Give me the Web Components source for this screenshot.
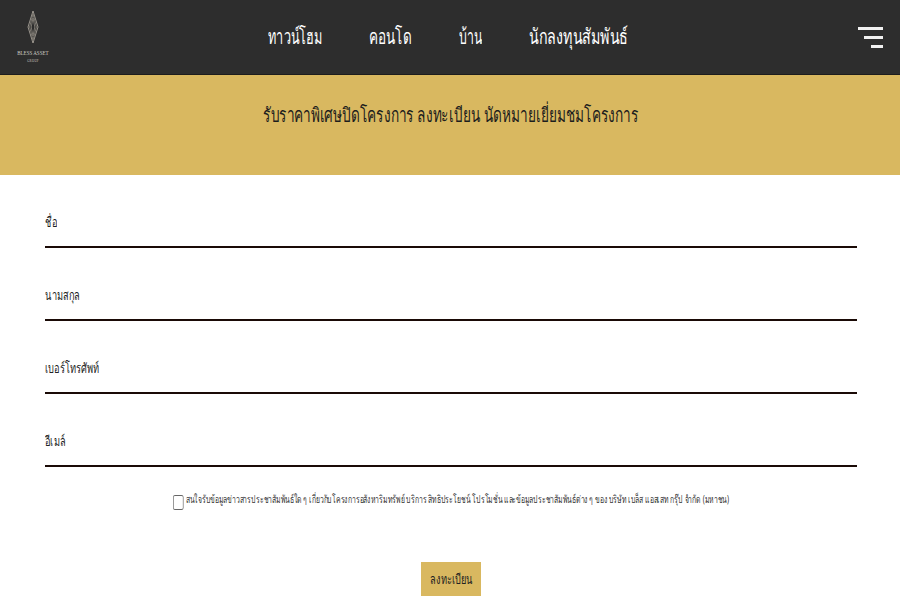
<!DOCTYPE html>
<html lang="th">
<head>
<meta charset="utf-8">
<title>Bless Asset</title>
<style>
  html, body { margin: 0; background: #fff; }
  body { font-family: "Noto Sans", "DejaVu Sans", sans-serif; height: 600px; overflow: hidden; }
</style>
</head>
<body>
<site-header>
  <nav-link><thin-text scale=".604">ทาวน์โฮม</thin-text></nav-link>
  <nav-link><thin-text scale=".645">คอนโด</thin-text></nav-link>
  <nav-link><thin-text scale=".587">บ้าน</thin-text></nav-link>
  <nav-link><thin-text scale=".68">นักลงทุนสัมพันธ์</thin-text></nav-link>
</site-header>
<promo-band><thin-text scale=".683">รับราคาพิเศษปิดโครงการ ลงทะเบียน นัดหมายเยี่ยมชมโครงการ</thin-text></promo-band>
<register-form>
  <form-field><thin-text>ชื่อ</thin-text></form-field>
  <form-field><thin-text>นามสกุล</thin-text></form-field>
  <form-field><thin-text>เบอร์โทรศัพท์</thin-text></form-field>
  <form-field><thin-text>อีเมล์</thin-text></form-field>
  <consent-row>สนใจรับข้อมูลข่าวสารประชาสัมพันธ์ใด ๆ เกี่ยวกับโครงการอสังหาริมทรัพย์ บริการ สิทธิประโยชน์ โปรโมชั่น และข้อมูลประชาสัมพันธ์ต่าง ๆ ของ บริษัท เบล็ส แอสเสท กรุ๊ป จำกัด (มหาชน)</consent-row>
  <gold-button><thin-text>ลงทะเบียน</thin-text></gold-button>
</register-form>

<script>
//the site's thai font is condensed, none installed is: squeeze the text and keep the narrow width in the flow
class ThinText extends HTMLElement {
  constructor(){
    super();
    this.attachShadow({mode:"open"}).innerHTML = `
      <style>
        :host { display:inline-block; white-space:nowrap; vertical-align:top; }
        span { display:inline-block; transform-origin:0 0; }
      </style>
      <span><slot></slot></span>`;
  }
  connectedCallback(){
    const scale = parseFloat(this.getAttribute("scale")) || 0.66;
    const inner = this.shadowRoot.querySelector("span");
    inner.style.transform = `scaleX(${scale})`;
    this.style.width = inner.offsetWidth * scale + "px";
  }
}

//header bar with logo, nav slot and menu icon
class SiteHeader extends HTMLElement {
  constructor(){
    super();
    this.attachShadow({mode:"open"}).innerHTML = `
      <style>
        :host { display:flex; align-items:center; height:75px; background:#2d2d2d; box-sizing:border-box; border-bottom:1px solid #1d1d1d; padding:0 17px; }
        .logo { width:32px; padding-bottom:2px; display:flex; flex-direction:column; align-items:center; color:#d0ccc4; font-family:"Liberation Serif",serif; }
        .logo svg { display:block; }
        .name { font-size:7px; line-height:6px; white-space:nowrap; margin-top:6px; transform:scaleX(.72); }
        .group { font-size:3px; line-height:4px; margin-top:3px; letter-spacing:.3px; }
        nav { flex:1; display:flex; justify-content:center; gap:47px; padding:0 11px 2px 0; }
        .menu { display:block; }
      </style>
      <div class="logo">
        <svg width="12" height="34" viewBox="0 0 12 34" fill="none" stroke="#b5afa4" stroke-width=".8">
          <path d="M6 1 11 17 6 33 1 17Z"/>
          <path d="M6 4 9.4 17 6 30 2.6 17Z" stroke="#8d887f"/>
          <path d="M6 8 7.8 17 6 26 4.2 17Z" stroke="#8d887f"/>
        </svg>
        <div class="name">BLESS ASSET</div>
        <div class="group">GROUP</div>
      </div>
      <nav><slot></slot></nav>
      <svg class="menu" width="25" height="21" viewBox="0 0 25 21" fill="#f1f1f1">
        <rect x="0" y="0" width="25" height="3"/>
        <rect x="6" y="9" width="19" height="3"/>
        <rect x="13" y="18" width="12" height="3"/>
      </svg>`;
  }
}

class NavLink extends HTMLElement {
  constructor(){
    super();
    this.attachShadow({mode:"open"}).innerHTML = `
      <style>:host { display:block; color:#fff; font-size:21px; line-height:24px; white-space:nowrap; }</style>
      <slot></slot>`;
  }
}

class PromoBand extends HTMLElement {
  constructor(){
    super();
    this.attachShadow({mode:"open"}).innerHTML = `
      <style>:host { display:block; height:100px; box-sizing:border-box; padding-top:27px; background:#d9b860; color:#1d1d1d; font-size:20px; line-height:26px; text-align:center; }</style>
      <slot></slot>`;
  }
}

class RegisterForm extends HTMLElement {
  constructor(){
    super();
    this.attachShadow({mode:"open"}).innerHTML = `
      <style>:host { display:block; padding:0 43px 0 45px; }</style>
      <slot></slot>`;
  }
}

class FormField extends HTMLElement {
  constructor(){
    super();
    this.attachShadow({mode:"open"}).innerHTML = `
      <style>
        :host { display:block; height:73px; box-sizing:border-box; border-bottom:2px solid #1a0a06; padding-top:37px; color:#222; font-size:14px; line-height:20px; }
      </style>
      <slot></slot>`;
  }
}

//whole row is squeezed around its centre, so the box sizes are divided by the same .654
class ConsentRow extends HTMLElement {
  constructor(){
    super();
    this.attachShadow({mode:"open"}).innerHTML = `
      <style>
        :host { display:flex; justify-content:center; align-items:flex-start; gap:3.8px; margin-top:25px; color:#333; font-size:10.5px; line-height:14px; white-space:nowrap; transform:scaleX(.654); }
        .box { flex:none; box-sizing:border-box; width:16px; height:15px; margin-top:3px; border:1px solid #666; border-left-width:1.53px; border-right-width:1.53px; border-radius:3px / 2px; background:#fff; }
      </style>
      <span class="box"></span><span><slot></slot></span>`;
  }
}

class GoldButton extends HTMLElement {
  constructor(){
    super();
    this.attachShadow({mode:"open"}).innerHTML = `
      <style>
        :host { display:flex; align-items:center; justify-content:center; width:60px; height:34px; margin:52px auto 0; background:#d9b860; color:#222; font-size:14px; }
      </style>
      <slot></slot>`;
  }
}

customElements.define("site-header", SiteHeader);
customElements.define("nav-link", NavLink);
customElements.define("promo-band", PromoBand);
customElements.define("register-form", RegisterForm);
customElements.define("form-field", FormField);
customElements.define("consent-row", ConsentRow);
customElements.define("gold-button", GoldButton);
//last, so the parents' font sizes are on when it measures itself
customElements.define("thin-text", ThinText);
</script>
</body>
</html>
